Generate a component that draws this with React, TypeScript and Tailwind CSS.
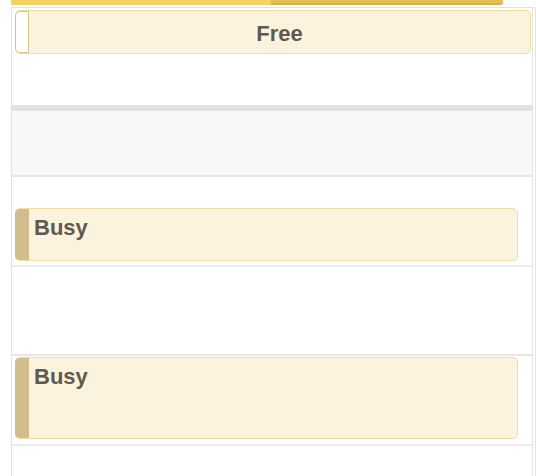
const events = {
  text: "text-[22px] leading-[26px] font-bold text-[#5f594e]",
};

function BusyEvent({ height, top }: { height: string; top: string }) {
  return (
    <div
      className={`${height} ${top} ml-[3px] w-[503px] flex overflow-hidden rounded-[5px] border border-[#f5df9e] border-l-0 bg-[#fcf3de]`}
    >
      <div className="w-[14px] shrink-0 bg-[#cfbd8d]" />
      <div className={`${events.text} pl-[5px] pt-[6px]`}>Busy</div>
    </div>
  );
}

export default function App() {
  return (
    <div className="w-[536px] h-[476px] bg-white overflow-hidden font-['Liberation_Sans',Arial,sans-serif]">
      {/* all-day strip at the top */}
      <div className="ml-[11px] w-[492px] h-[5px] flex">
        <div className="w-[260px] bg-[#f8d260]" />
        <div className="flex-1 bg-[#e6bf52] border-b-2 border-[#d8b146] rounded-br-[3px]" />
      </div>

      <div className="flex h-[471px] pt-[2px]">
        <div className="w-[11px] shrink-0" />
        <div className="w-[522px] shrink-0 border-x border-[#e2e2e2] flex flex-col">
          {/* free slot */}
          <div className="h-[104px] border-t border-b-[6px] border-[#e2e2e2] pt-[2px]">
            <div className="ml-[3px] w-[516px] h-[44px] flex overflow-hidden rounded-[5px] border border-[#f5dc98] border-l-0 bg-[#fcf3de]">
              <div className="w-[14px] shrink-0 bg-white border-[1.5px] border-[#d6c287] rounded-l-[5px]" />
              <div className={`${events.text} flex-1 flex items-center justify-center pt-[3px]`}>Free</div>
            </div>
          </div>

          <div className="h-[66px] bg-[#f8f8f8] border-b-2 border-[#e6e6e6]" />

          <div className="h-[90px] border-b-2 border-[#ececec]">
            <BusyEvent height="h-[53px]" top="mt-[31px]" />
          </div>

          <div className="h-[89px] border-b-2 border-[#e6e6e6]" />

          <div className="h-[90px] border-b-2 border-[#ececec]">
            <BusyEvent height="h-[82px]" top="mt-[1px]" />
          </div>

          <div className="flex-1" />
        </div>
        <div className="w-[2px] shrink-0" />
        <div className="w-[1px] shrink-0 bg-[#e2e2e2]" />
      </div>
    </div>
  );
}
